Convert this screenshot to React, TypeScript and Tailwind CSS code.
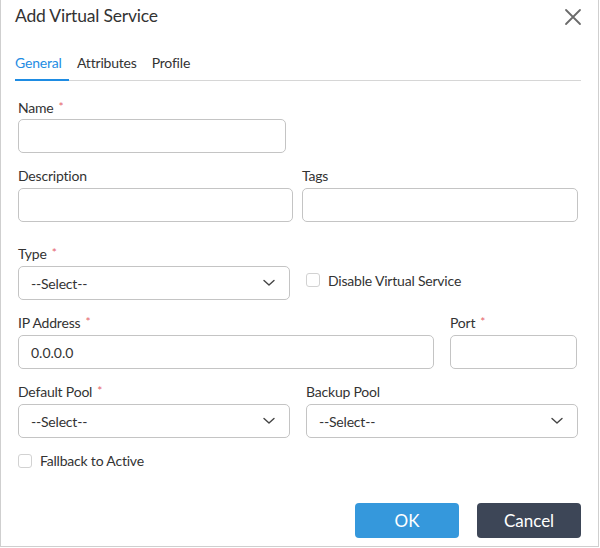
import React from "react";

const Star = () => <span className="text-[#e5626b] ml-[5px] text-[12px] relative top-[-2px]">*</span>;

const Label = ({ children, req }: { children: React.ReactNode; req?: boolean }) => (
  <div className="text-[14px] leading-[20px] text-[#333] h-[20px] mb-[2px] tracking-[-0.2px]">
    {children}
    {req && <Star />}
  </div>
);

const Input = ({ w, value }: { w: string; value?: string }) => (
  <div className={"h-[34px] border border-[#c4c4c4] rounded-[5px] bg-white flex items-center px-[12px] text-[14px] text-[#333] " + w}>
    {value}
  </div>
);

const Chevron = () => (
  <svg width="12" height="8" viewBox="0 0 12 8" fill="none">
    <path d="M1 1.5 L6 6 L11 1.5" stroke="#444" strokeWidth="1.4" strokeLinecap="round" strokeLinejoin="round" />
  </svg>
);

const Select = ({ w }: { w: string }) => (
  <div className={"h-[34px] border border-[#c4c4c4] rounded-[5px] bg-white flex items-center justify-between pl-[12px] pr-[14px] text-[14px] text-[#333] tracking-[-0.2px] " + w}>
    <span>--Select--</span>
    <Chevron />
  </div>
);

const Checkbox = () => <div className="w-[14px] h-[14px] border border-[#d2d2d2] rounded-[3px] bg-white" />;

export default function App() {
  return (
    <div className="w-[599px] h-[547px] border-l border-r border-b border-[#cfcfcf] bg-white font-['Lato',sans-serif] text-[#333] flex flex-col">
      <div className="flex items-start justify-between pl-[14px] pr-[16px] pt-[5px]">
        <div className="text-[17.5px] leading-[22px] text-[#333] tracking-[-0.2px]">Add Virtual Service</div>
        <svg width="18" height="18" viewBox="0 0 18 18" className="mt-[3px]">
          <path d="M2 2 L16 16 M16 2 L2 16" stroke="#6b6b6b" strokeWidth="1.8" strokeLinecap="round" />
        </svg>
      </div>

      <div className="ml-[14px] mr-[17px] mt-[26px] border-b border-[#d6d6d6] flex text-[14px] leading-[20px] tracking-[-0.2px]">
        <div className="text-[#1e8ce3] border-b-2 border-[#1e8ce3] pb-[6px] w-[54px] -mb-[1px]">General</div>
        <div className="ml-[8px] text-[#333]">Attributes</div>
        <div className="ml-[15px] text-[#333]">Profile</div>
      </div>

      <div className="pl-[17px] pr-[21px] mt-[17px] flex flex-col">
        <Label req>Name</Label>
        <div className="-mt-[1px]">
          <Input w="w-[268px]" />
        </div>

        <div className="flex gap-[9px] mt-[13px]">
          <div>
            <Label>Description</Label>
            <Input w="w-[275px]" />
          </div>
          <div>
            <Label>Tags</Label>
            <Input w="w-[276px]" />
          </div>
        </div>

        <div className="flex mt-[22px] items-end">
          <div>
            <Label req>Type</Label>
            <Select w="w-[272px]" />
          </div>
          <div className="flex items-center ml-[16px] h-[34px] mb-[3px]">
            <Checkbox />
            <span className="ml-[8px] text-[14px] tracking-[-0.2px]">Disable Virtual Service</span>
          </div>
        </div>

        <div className="flex gap-[16px] mt-[13px]">
          <div>
            <Label req>IP Address</Label>
            <Input w="w-[416px]" value="0.0.0.0" />
          </div>
          <div>
            <Label req>Port</Label>
            <Input w="w-[127px]" />
          </div>
        </div>

        <div className="flex gap-[16px] mt-[13px]">
          <div>
            <Label req>Default Pool</Label>
            <Select w="w-[272px]" />
          </div>
          <div>
            <Label>Backup Pool</Label>
            <Select w="w-[272px]" />
          </div>
        </div>

        <div className="flex items-center mt-[13px] h-[20px]">
          <Checkbox />
          <span className="ml-[8px] text-[14px] leading-[20px] tracking-[-0.2px]">Fallback to Active</span>
        </div>
      </div>

      <div className="flex justify-end gap-[18px] pr-[17px] mt-[32px]">
        <div className="w-[104px] h-[35px] rounded-[4px] bg-[#3598dc] text-white text-[17px] flex items-center justify-center">OK</div>
        <div className="w-[104px] h-[35px] rounded-[4px] bg-[#3d4657] text-white text-[17px] flex items-center justify-center">Cancel</div>
      </div>
    </div>
  );
}
